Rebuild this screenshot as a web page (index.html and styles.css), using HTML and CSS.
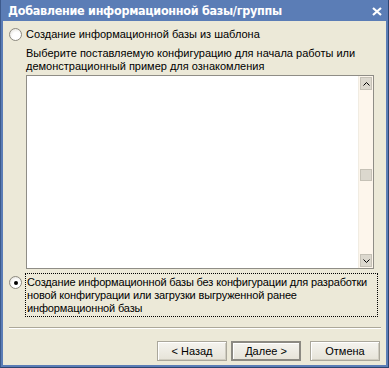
FILE: index.html
```html
<!DOCTYPE html>
<html>
<head>
    <title>Добавление информационной базы/группы</title>
    <link rel="stylesheet" href="styles.css">
</head>
<body>
    <div class="window">
        <div class="titlebar">
            <span class="title">Добавление информационной базы/группы</span>
            <svg class="close" width="10" height="9" viewBox="0 0 10 9">
                <path d="M1 1 L9 8 M9 1 L1 8" stroke="#fff" stroke-width="2.2" fill="none"/>
            </svg>
        </div>
        <div class="content">
            <label class="option">
                <span class="radio"></span>
                <span>Создание информационной базы из шаблона</span>
            </label>
            <div class="template">
                <div class="hint">Выберите поставляемую конфигурацию для начала работы или демонстрационный пример для ознакомления</div>
                <div class="listbox">
                    <div class="list"></div>
                    <div class="scrollbar">
                        <div class="sb-btn">
                            <svg width="7" height="4" viewBox="0 0 7 4"><path d="M0.5 3.5 L3.5 0.5 L6.5 3.5" stroke="#000" fill="none"/></svg>
                        </div>
                        <div class="sb-track">
                            <div class="sb-thumb"></div>
                        </div>
                        <div class="sb-btn">
                            <svg width="7" height="4" viewBox="0 0 7 4"><path d="M0.5 0.5 L3.5 3.5 L6.5 0.5" stroke="#000" fill="none"/></svg>
                        </div>
                    </div>
                </div>
            </div>
            <label class="option checked">
                <span class="radio"><span class="dot"></span></span>
                <span class="focus">Создание информационной базы без конфигурации для разработки новой конфигурации или загрузки выгруженной ранее информационной базы</span>
            </label>
            <div class="separator"></div>
            <div class="buttons">
                <button class="btn">&lt; Назад</button>
                <button class="btn default">Далее &gt;</button>
                <button class="btn cancel">Отмена</button>
            </div>
        </div>
    </div>
</body>
</html>
```

FILE: styles.css
```css
body {
    margin: 0;
    font-family: 'Liberation Sans', Arial, sans-serif;
    font-size: 11px;
    color: #000;
    background: #ece9d8;
}
.window {
    width: 389px;
    height: 368px;
    box-sizing: border-box;
    display: flex;
    flex-direction: column;
    background: #5b7db6;
    border-left: 1px solid #3d5a8c;
    border-right: 1px solid #2d4470;
    border-bottom: 1px solid #2d4470;
}
.titlebar {
    height: 21px;
    display: flex;
    align-items: center;
    justify-content: space-between;
    padding: 0 6px 0 7px;
}
.title {
    color: #fff;
    font-family: 'DejaVu Sans Condensed', 'DejaVu Sans', sans-serif;
    font-weight: bold;
    font-size: 12.5px;
    letter-spacing: -0.3px;
}
.close {
    margin-top: 1px;
}
.content {
    flex: 1;
    margin: 0 2px 2px 2px;
    background: #ece9d8;
    padding: 7px 0 0 6px;
    display: flex;
    flex-direction: column;
}
.option {
    display: flex;
    align-items: flex-start;
}
.radio {
    width: 11px;
    height: 11px;
    border: 1px solid #8d8a80;
    border-radius: 50%;
    background: radial-gradient(circle at 60% 65%, #fff 40%, #dcdad2 100%);
    margin-right: 4px;
    flex-shrink: 0;
    display: flex;
    align-items: center;
    justify-content: center;
}
.dot {
    width: 4px;
    height: 4px;
    border-radius: 50%;
    background: #000;
}
.template {
    margin: 6px 0 0 17px;
}
.hint {
    line-height: 13px;
    width: 345px;
}
.listbox {
    margin-top: 2px;
    width: 348px;
    height: 194px;
    box-sizing: border-box;
    border: 1px solid #8f8d86;
    background: #fff;
    display: flex;
}
.list {
    flex: 1;
}
.scrollbar {
    width: 15px;
    background: #fdf6ec;
    border-left: 1px solid #f1ece2;
    display: flex;
    flex-direction: column;
    padding: 1px 1px 1px 1px;
    box-sizing: border-box;
}
.sb-btn {
    height: 11px;
    background: #dcd8ce;
    border: 1px solid #c5c1b6;
    display: flex;
    align-items: center;
    justify-content: center;
}
.sb-track {
    flex: 1;
    padding-top: 79px;
}
.sb-thumb {
    height: 10px;
    background: #dcd8ce;
    border: 1px solid #c5c1b6;
}
.checked {
    margin-top: 4px;
}
.checked .radio {
    margin-top: 3px;
    margin-right: 3px;
}
.focus {
    border: 1px dotted #000;
    padding: 2px 1px 1px 1px;
    line-height: 13px;
    width: 349px;
    letter-spacing: -0.15px;
}
.separator {
    margin: 10px 5px 0 0;
    border-top: 1px solid #aca899;
    border-bottom: 1px solid #fff;
}
.buttons {
    display: flex;
    justify-content: flex-end;
    margin: 12px 6px 0 0;
}
.btn {
    width: 70px;
    height: 20px;
    margin-left: 4px;
    font-family: 'Liberation Sans', Arial, sans-serif;
    font-size: 11px;
    color: #000;
    background: linear-gradient(#f5f4ef, #e6e3d8);
    border: 1px solid #aaa79b;
    box-shadow: inset 1px 1px 0 #fff, inset -1px -1px 0 #cfccc0;
    padding: 0;
}
.default {
    border-color: #8c8a82;
    box-shadow: inset 1px 1px 0 #8c8a82, inset -1px -1px 0 #8c8a82, inset 2px 2px 0 #fff;
}
.cancel {
    margin-left: 9px;
}
```
